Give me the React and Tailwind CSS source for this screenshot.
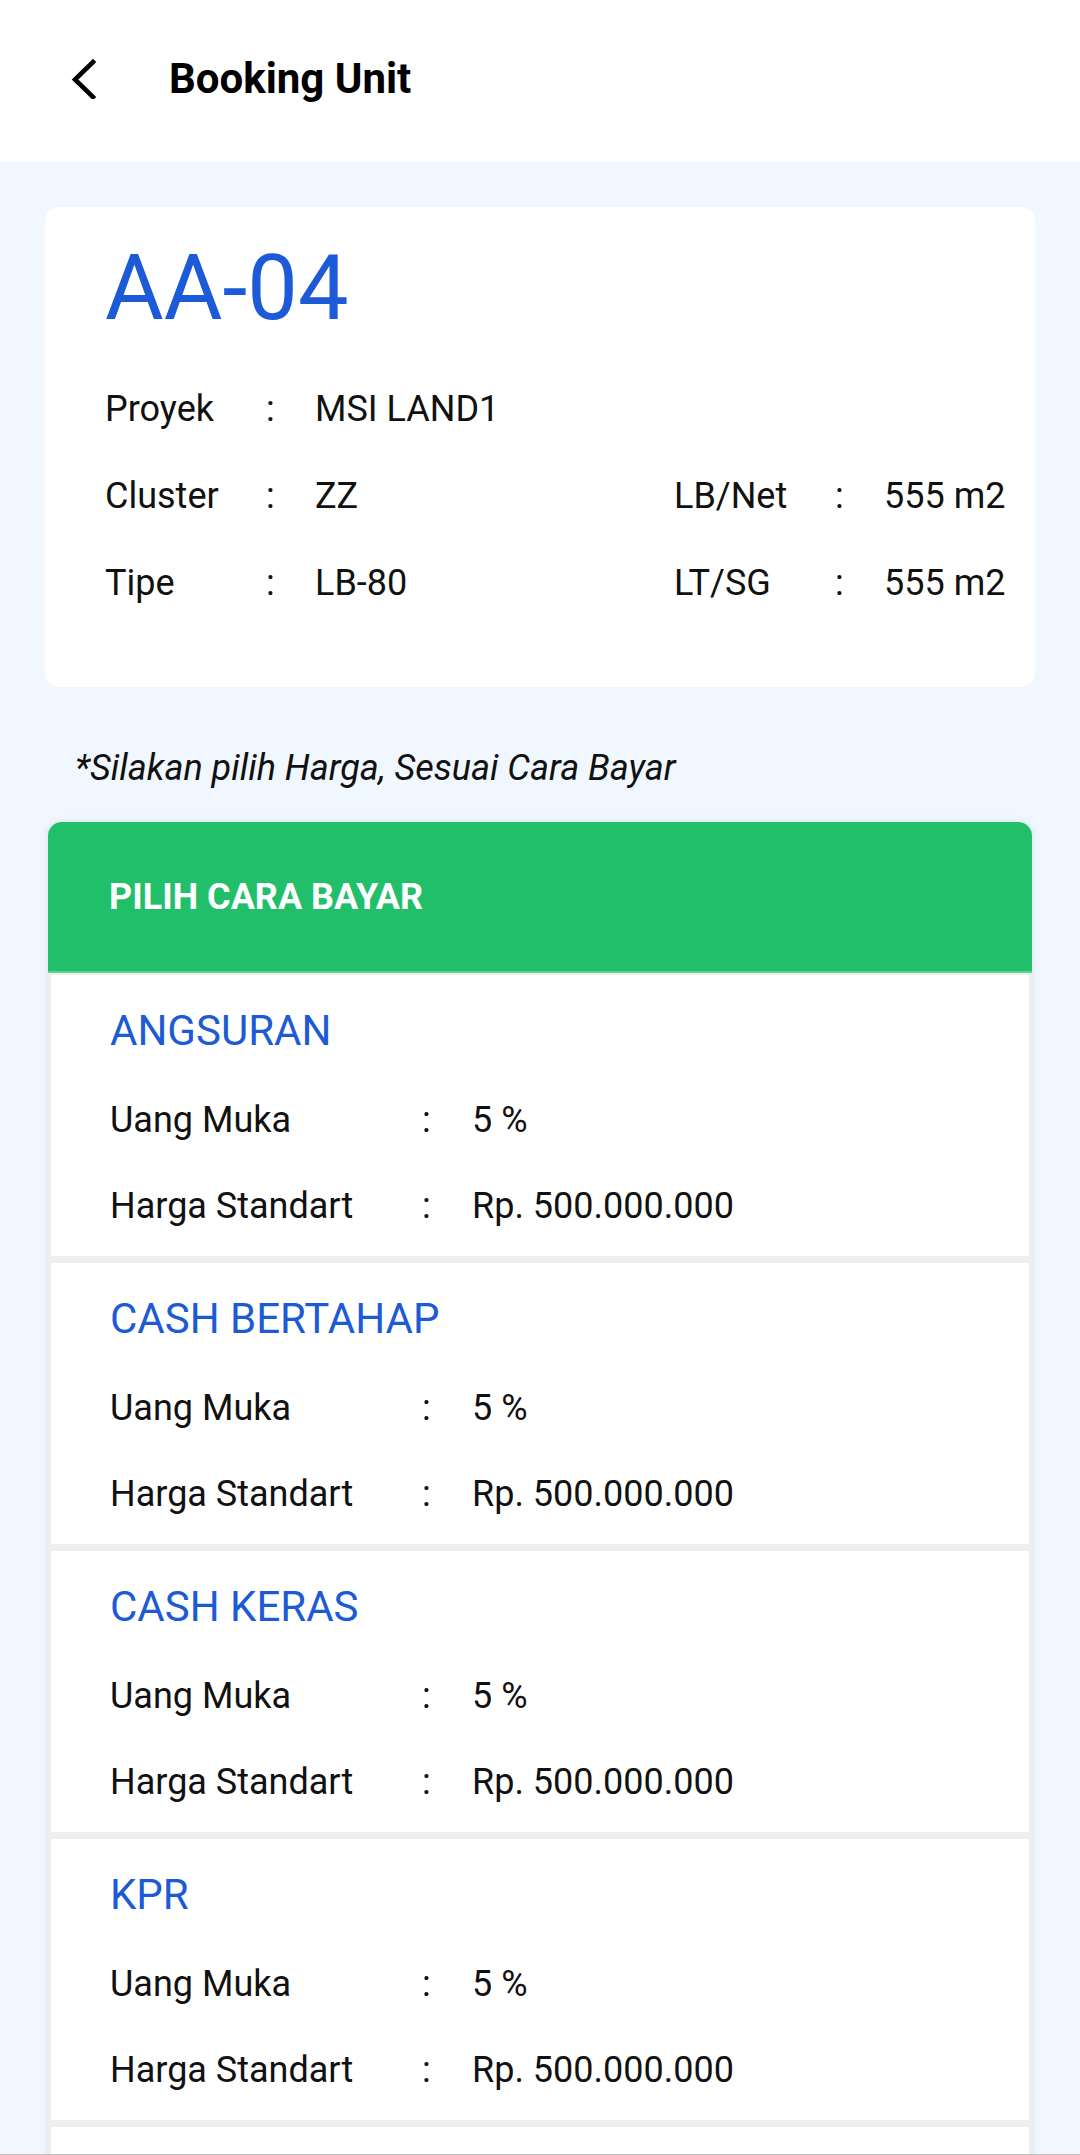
import React from 'react';

const unit = {
    code: 'AA-04',
    left: [
        { label: 'Proyek', value: 'MSI LAND1' },
        { label: 'Cluster', value: 'ZZ' },
        { label: 'Tipe', value: 'LB-80' },
    ],
    right: [null, { label: 'LB/Net', value: '555 m2' }, { label: 'LT/SG', value: '555 m2' }],
};

const payments = [
    { name: 'ANGSURAN', dp: '5 %', price: 'Rp. 500.000.000' },
    { name: 'CASH BERTAHAP', dp: '5 %', price: 'Rp. 500.000.000' },
    { name: 'CASH KERAS', dp: '5 %', price: 'Rp. 500.000.000' },
    { name: 'KPR', dp: '5 %', price: 'Rp. 500.000.000' },
];

const InfoCell = ({ item }) => {
    if (!item) return null;
    return (
        <div className="flex">
            <span className="w-[161px]">{item.label}</span>
            <span className="w-[49px]">:</span>
            <span>{item.value}</span>
        </div>
    );
};

const PaymentItem = ({ item }) => (
    <div className="bg-white h-[281px] pl-[59px] pt-[35px]">
        <h3 className="text-[42px] leading-none text-[#1d5bd6]">{item.name}</h3>
        <div className="mt-[25px] text-[36px] leading-[86px] text-[#111]">
            <div className="flex">
                <span className="w-[312px]">Uang Muka</span>
                <span className="w-[50px]">:</span>
                <span>{item.dp}</span>
            </div>
            <div className="flex">
                <span className="w-[312px]">Harga Standart</span>
                <span className="w-[50px]">:</span>
                <span>{item.price}</span>
            </div>
        </div>
    </div>
);

const App = () => {
    return (
        <div className="relative w-[1080px] h-[2155px] overflow-hidden bg-[#f0f7fe] font-['Roboto','Noto_Sans',sans-serif]">
            {/* top bar */}
            <header className="h-[162px] bg-white flex items-center pb-[5px]">
                <button className="ml-[68px] w-[30px] h-[40px] flex items-center justify-center">
                    <svg width="26" height="40" viewBox="0 0 26 40">
                        <polyline points="23,3 5,20.5 23,38" fill="none" stroke="#000" strokeWidth="4.6" strokeLinecap="square" strokeLinejoin="miter" />
                    </svg>
                </button>
                <h1 className="ml-[71px] text-[42px] font-bold leading-none text-black">Booking Unit</h1>
            </header>

            <main className="px-[45px] pt-[45px]">
                {/* unit card */}
                <div className="bg-white rounded-[14px] h-[480px] pl-[60px] pt-[37px]">
                    <h2 className="text-[90px] leading-none text-[#1c5ad8]">{unit.code}</h2>
                    <div className="mt-[32px] text-[36px] leading-[87px] text-[#111]">
                        {unit.left.map((row, i) => (
                            <div key={row.label} className="flex">
                                <div className="w-[569px]">
                                    <InfoCell item={row} />
                                </div>
                                <InfoCell item={unit.right[i]} />
                            </div>
                        ))}
                    </div>
                </div>

                <p className="mt-[63px] pl-[30px] text-[36px] italic leading-none text-[#111]">
                    *Silakan pilih Harga, Sesuai Cara Bayar
                </p>

                {/* payment options */}
                <div className="mt-[36px] mx-[3px] rounded-t-[14px] overflow-hidden shadow-[0_0_8px_rgba(0,0,0,0.10)]">
                    <div className="h-[151px] bg-[#22bf6b] flex items-center pl-[61px] border-b-2 border-[#5fd394]">
                        <span className="text-[36px] font-bold text-white leading-none">PILIH CARA BAYAR</span>
                    </div>
                    <div className="bg-[#eeeeee] px-[3px] pt-[2px] flex flex-col gap-[7px]">
                        {payments.map((p) => (
                            <PaymentItem key={p.name} item={p} />
                        ))}
                        <div className="bg-white h-[281px]" />
                    </div>
                </div>
            </main>

            <div className="absolute left-0 right-0 bottom-0 h-[1px] bg-[#bdbdbd]" />
        </div>
    );
};

export default App;
